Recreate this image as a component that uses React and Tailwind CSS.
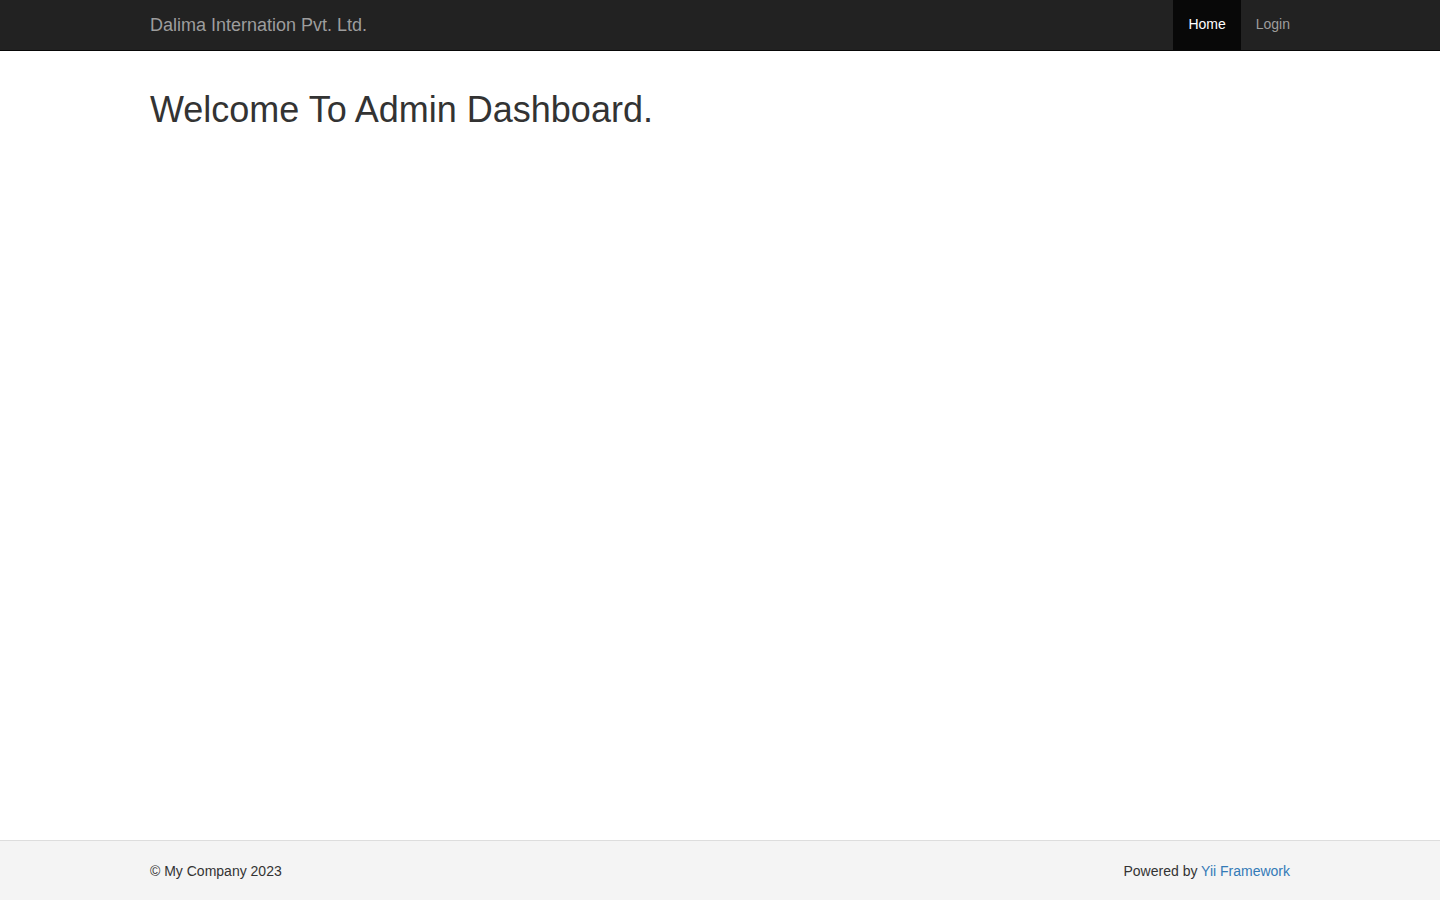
export default function App() {
  return (
    <div className="min-h-screen flex flex-col bg-white text-[14px] leading-[1.42857] text-[#333]" style={{ fontFamily: '"Liberation Sans", Arial, sans-serif' }}>
      {/* Navbar */}
      <nav className="h-[51px] bg-[#222] border-b border-[#080808] shrink-0">
        <div className="w-[1170px] mx-auto px-[15px] h-full flex items-stretch justify-between">
          <a href="#" className="flex items-center text-[18px] text-[#9d9d9d] leading-[20px]">
            Dalima Internation Pvt. Ltd.
          </a>
          <ul className="flex items-stretch">
            <li className="flex">
              <a href="#" className="flex items-center px-[15px] bg-[#080808] text-white">Home</a>
            </li>
            <li className="flex">
              <a href="#" className="flex items-center pl-[15px] text-[#9d9d9d]">Login</a>
            </li>
          </ul>
        </div>
      </nav>

      {/* Content */}
      <main className="flex-1">
        <div className="w-[1170px] mx-auto px-[15px] pt-[19px]">
          <h1 className="mt-[20px] text-[36px] leading-[1.1] font-normal text-[#333]">Welcome To Admin Dashboard.</h1>
        </div>
      </main>

      {/* Footer */}
      <footer className="h-[60px] bg-[#f4f4f4] border-t border-[#ddd] shrink-0">
        <div className="w-[1170px] mx-auto px-[15px] pt-[21px] flex justify-between">
          <p>© My Company 2023</p>
          <p>
            Powered by <a href="#" className="text-[#337ab7]">Yii Framework</a>
          </p>
        </div>
      </footer>
    </div>
  );
}
